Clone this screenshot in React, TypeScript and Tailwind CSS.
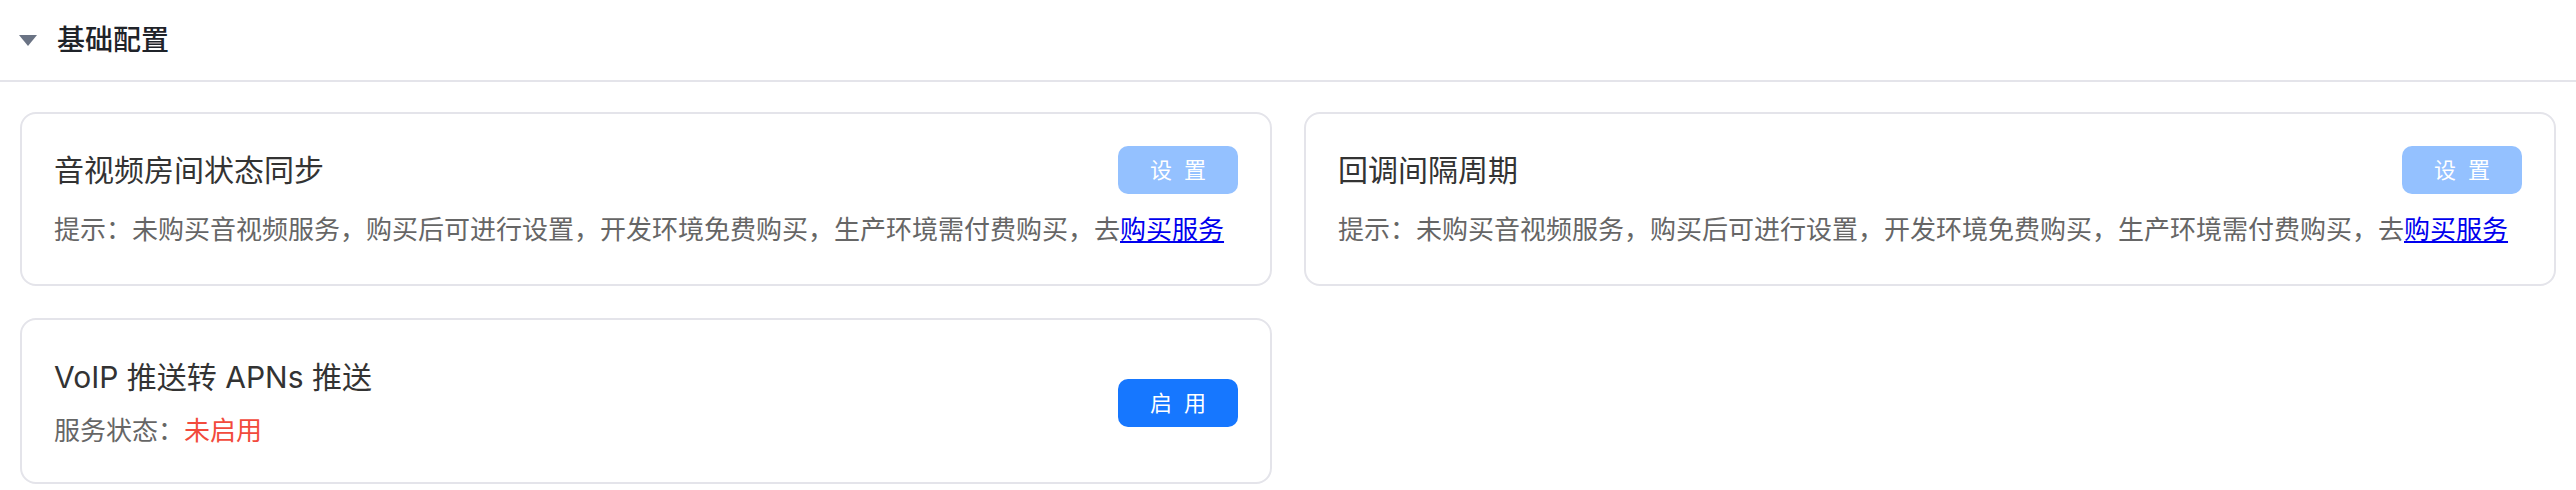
import { ReactNode } from 'react';

const hint = '提示：未购买音视频服务，购买后可进行设置，开发环境免费购买，生产环境需付费购买，去';

const Btn = ({ label, disabled }: { label: string; disabled?: boolean }) => (
    <button
        className={`w-[120px] h-[48px] rounded-[10px] flex items-center justify-center gap-[12px] text-[22px] text-white shrink-0 ${
            disabled ? 'bg-[#94c1ff] cursor-not-allowed' : 'bg-[#1677ff]'
        }`}>
        {label.split('').map((c, i) => (
            <span key={i}>{c}</span>
        ))}
    </button>
);

const Card = ({ children }: { children: ReactNode }) => (
    <div className="border-2 border-[#e4e4ea] rounded-[16px] bg-white px-[32px]">{children}</div>
);

const HintCard = ({ title }: { title: string }) => (
    <Card>
        <div className="pt-[32px] pb-[36px]">
            <div className="flex items-center justify-between h-[48px]">
                <span className="text-[30px] leading-[40px] text-[#333]">{title}</span>
                <Btn label="设置" disabled />
            </div>
            <p className="mt-[18px] text-[26px] leading-[36px] text-[#666] whitespace-nowrap">
                {hint}
                <a href="#" className="text-[#0000ee] underline">购买服务</a>
            </p>
        </div>
    </Card>
);

export default function App() {
    return (
        <div className="w-[2576px] min-h-[490px] bg-white font-[Inter,'Noto_Sans_CJK_SC',sans-serif]">
            {/* section header */}
            <div className="h-[82px] flex items-center pl-[19px] border-b-2 border-[#e4e4ea]">
                <svg width="18" height="11" viewBox="0 0 18 11">
                    <path d="M0 0 H18 L9 11 Z" fill="#6a7384" />
                </svg>
                <span className="ml-[20px] text-[28px] font-medium text-[#1f2329]">基础配置</span>
            </div>

            <div className="grid grid-cols-2 gap-[32px] px-[20px] pt-[30px] pb-[6px]">
                <HintCard title="音视频房间状态同步" />
                <HintCard title="回调间隔周期" />

                <Card>
                    <div className="flex items-center justify-between pt-[37px] pb-[33px]">
                        <div>
                            <div className="text-[30px] leading-[40px] text-[#333]">VoIP 推送转 APNs 推送</div>
                            <div className="mt-[16px] text-[26px] leading-[36px] text-[#666]">
                                服务状态：<span className="text-[#f24a3c]">未启用</span>
                            </div>
                        </div>
                        <Btn label="启用" />
                    </div>
                </Card>
            </div>
        </div>
    );
}
